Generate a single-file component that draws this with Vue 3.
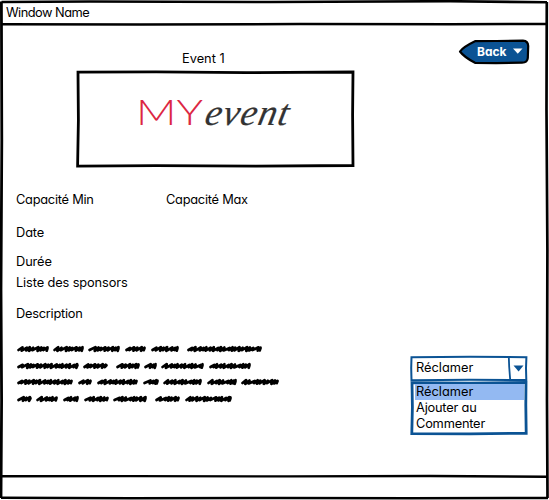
<script setup>
const rows = [
  { y: 9, words: [[17, 49], [53, 84], [88, 120], [125, 146], [151, 179], [187, 262]] },
  { y: 26, words: [[17, 79], [83, 108], [116, 140], [144, 157], [161, 204], [209, 251]] },
  { y: 42, words: [[17, 73], [78, 92], [97, 138], [143, 159], [163, 202], [207, 237], [241, 279]] },
  { y: 59, words: [[17, 32], [36, 58], [63, 79], [84, 109], [113, 147], [155, 180], [185, 232]] },
]

const rise = [1.7, 1.4, 1.8, 1.2, 1.9, 1.5, 1.1]
const step = [4, 5.2, 3.6, 4.2, 6, 3.8, 3.5, 5]

function scribble([start, end], y, seed) {
  let x = start + 1.5
  let i = seed
  let d = `M${x} ${y + 1}`
  while (x < end - 3.5) {
    const dx = Math.min(step[i % step.length], end - 1.5 - x)
    const h = rise[i % rise.length]
    d += `L${(x + dx).toFixed(1)} ${y - h}L${(x + dx - 0.8).toFixed(1)} ${y + h}`
    x += dx - 0.8
    i++
  }
  return d + `L${end - 1.5} ${y - 0.7}`
}

const scribbles = rows.flatMap((row, r) =>
  row.words.map((word, w) => scribble(word, row.y, r * 3 + w * 2)),
)
</script>

<template>
  <div class="window">
    <svg class="frame" viewBox="0 0 549 500" fill="none" stroke="#000">
      <path d="M1.5 2L90 1.5L270 2L450 1.2L547 2.3" stroke-width="2.6" />
      <path d="M2 24.2L140 24.5L300 24L450 24.3L546 24" stroke-width="2.5" />
      <path d="M1.4 1.5L1.8 140L1 290L1.6 400L1 498" stroke-width="2.8" />
      <path d="M546.8 2L546.5 110L547.4 250L547 400L547.5 498" stroke-width="2.7" />
      <path d="M1 476.2L130 476.1L290 476.4L430 476L547 476.7" stroke-width="2.4" />
      <path d="M1 497.7L130 498.2L280 498L410 498.3L548 498" stroke-width="2.5" />
    </svg>
    <header class="title">Window Name</header>
    <main class="content">
      <section class="details">
        <div class="event-name">Event 1</div>
        <div class="picture">
          <svg viewBox="0 0 279 98" width="279" height="98">
            <path d="M2 2.1L80 1.8L170 2.6L277 2L276.6 45L277 95.5L180 96.2L80 95.7L1.6 96.1L2.4 50Z" fill="#fff" stroke="#000" stroke-width="2.8" />
            <text class="my" x="60" y="55" textLength="67" lengthAdjust="spacingAndGlyphs">MY</text>
            <text class="ev" transform="translate(127.5 54.5) skewX(-12)" textLength="83" lengthAdjust="spacing">event</text>
          </svg>
        </div>
        <div class="capacity"><span>Capacité Min</span><span>Capacité Max</span></div>
        <div class="field date">Date</div>
        <div class="field duration">Durée</div>
        <div class="field sponsors">Liste des sponsors</div>
        <div class="field description">Description</div>
        <svg class="scribble" viewBox="0 0 300 70" width="300" height="70">
          <path v-for="(d, i) in scribbles" :key="i" :d="d" />
        </svg>
      </section>
      <aside class="side">
        <button class="back">
          <svg class="shape" viewBox="0 0 72 26">
            <path d="M2 12.5Q5 8 17 2.2L38 2L65 1.7Q70 2 70.2 7L69.8 19Q69.5 23.5 64 23.7L38 24.2L17 23.8Q6 18 2 12.5Z" fill="#0b5394" stroke="#000" stroke-width="2.2" stroke-linejoin="round" />
            <path d="M55 9.5L64.5 9.5L59.8 14.8Z" fill="#fff" />
          </svg>
          <span>Back</span>
        </button>
        <div class="combo">
          <svg class="shape" viewBox="0 0 118 81" fill="none" stroke="#0b5394">
            <path d="M1.5 2.2L60 1.7L116.4 2.2L116 13L116.3 25L60 24.7L1.5 25.2L1.2 13Z" stroke-width="2" />
            <path d="M98.8 2L99.2 12L100.2 25" stroke-width="1.8" />
            <path d="M103.5 10.5L113.5 10.5L108.6 16.5Z" fill="#0b5394" stroke="none" />
            <path d="M2 27.6L60 28.2L116 27.4L115.8 50L116.2 78.3L60 78.8L1.8 78.6L2.4 52Z" stroke-width="2.8" />
          </svg>
          <div class="selected">Réclamer</div>
          <ul class="options">
            <li class="active">Réclamer</li>
            <li>Ajouter au</li>
            <li>Commenter</li>
          </ul>
        </div>
      </aside>
    </main>
  </div>
</template>

<style>
body { margin: 0; background: #fff; }
</style>

<style scoped>
.window {
  position: relative;
  width: 549px;
  height: 500px;
  overflow: hidden;
  background: #fff;
  color: #000;
  font: 430 12.8px/16px Inter, "Open Sans", sans-serif;
  font-feature-settings: "cv11", "ss03";
  letter-spacing: -0.1px;
}
.frame, .shape {
  position: absolute;
  inset: 0;
  width: 100%;
  height: 100%;
}
.title { position: relative; box-sizing: border-box; height: 25px; padding: 5px 6px; letter-spacing: -0.5px; }
.content { position: relative; display: flex; justify-content: space-between; }
.details { width: 380px; }
.event-name { width: 44px; margin: 26px 0 0 182px; white-space: nowrap; letter-spacing: 0; }
.picture { height: 98px; margin: 3px 0 0 76px; }
.picture svg, .scribble { display: block; }
.my { font: 300 35px Lato, sans-serif; fill: #dc2643; letter-spacing: 0; }
.ev { font: italic 37px "Liberation Serif", serif; fill: #333; stroke: #333; stroke-width: 0.2; letter-spacing: 0; }
.capacity { display: flex; margin: 24px 0 0 16px; letter-spacing: -0.25px; }
.capacity span { width: 150px; }
.field { margin-left: 16px; }
.date { margin-top: 17px; }
.duration { margin-top: 13px; }
.sponsors { margin-top: 5px; letter-spacing: -0.12px; }
.description { margin-top: 15px; letter-spacing: -0.25px; }
.scribble { margin-top: 18px; fill: none; stroke: #000; stroke-width: 2.7; stroke-linecap: round; stroke-linejoin: round; }
.side { width: 139px; }
.back {
  position: relative;
  display: block;
  width: 72px;
  height: 26px;
  margin: 14px 0 0 48px;
  padding: 0 0 1px 19px;
  border: 0;
  background: none;
  color: #fff;
  font: 700 12px/16px Inter, sans-serif;
  font-feature-settings: "cv11";
  text-align: left;
}
.back span { position: relative; }
.combo { position: relative; width: 118px; height: 81px; margin-top: 290px; }
.selected { position: relative; height: 26px; padding-left: 6px; line-height: 26px; letter-spacing: 0; }
.options { position: relative; margin: 3px 4px 0 5px; padding: 0; list-style: none; }
.options li { height: 16px; padding-left: 1px; letter-spacing: -0.2px; }
.options .active { background: #93b9f2; letter-spacing: 0; }
</style>
